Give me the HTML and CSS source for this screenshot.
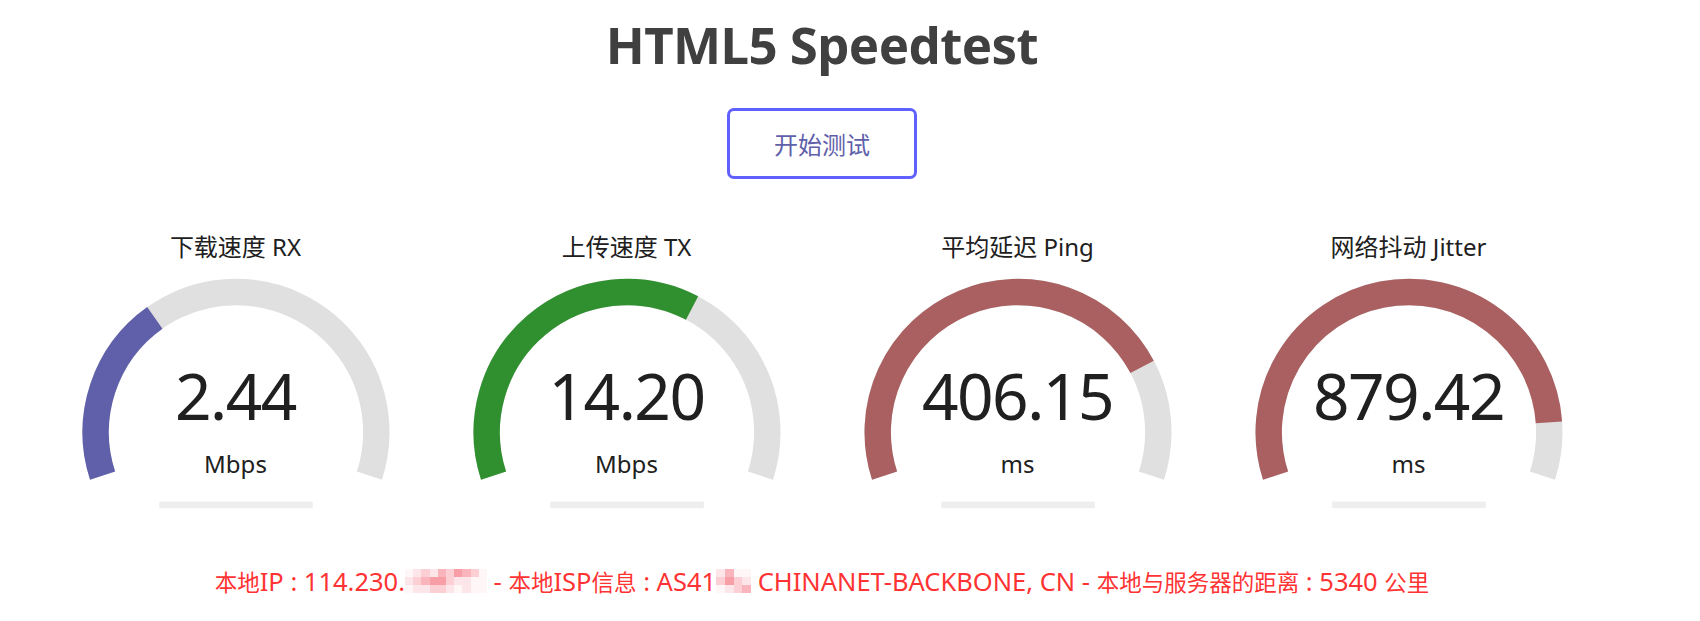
FILE: index.html
```
<!DOCTYPE html>
<html lang="zh-CN">
<head>
<meta charset="utf-8">
<title>HTML5 Speedtest</title>
<link rel="stylesheet" href="styles.css">
</head>
<body>
<div class="page">
  <h1 class="title">HTML5 Speedtest</h1>
  <button class="start-btn" type="button">开始测试</button>

  <div class="gauges">
    <div class="gauge">
      <svg class="meter" viewBox="0 0 384 300" width="384" height="300">
        <path class="arc-bg" d="M 58.57 247.66 A 140.3 140.3 0 1 1 325.43 247.66"/>
        <path class="arc-dl" d="M 58.57 247.66 A 140.3 140.3 0 0 1 110.82 89.87"/>
        <rect class="progress" x="115.2" y="273.6" width="153.6" height="6.6"/>
      </svg>
      <div class="gauge-name">下载速度 RX</div>
      <div class="gauge-value"><div class="num">2.44</div><div class="unit">Mbps</div></div>
    </div>

    <div class="gauge">
      <svg class="meter" viewBox="0 0 384 300" width="384" height="300">
        <path class="arc-bg" d="M 58.57 247.66 A 140.3 140.3 0 1 1 325.43 247.66"/>
        <path class="arc-ul" d="M 58.57 247.66 A 140.3 140.3 0 0 1 257.07 80.01"/>
        <rect class="progress" x="115.2" y="273.6" width="153.6" height="6.6"/>
      </svg>
      <div class="gauge-name">上传速度 TX</div>
      <div class="gauge-value"><div class="num">14.20</div><div class="unit">Mbps</div></div>
    </div>

    <div class="gauge">
      <svg class="meter" viewBox="0 0 384 300" width="384" height="300">
        <path class="arc-bg" d="M 58.57 247.66 A 140.3 140.3 0 1 1 325.43 247.66"/>
        <path class="arc-ms" d="M 58.57 247.66 A 140.3 140.3 0 0 1 316.11 138.87"/>
        <rect class="progress" x="115.2" y="273.6" width="153.6" height="6.6"/>
      </svg>
      <div class="gauge-name">平均延迟 Ping</div>
      <div class="gauge-value"><div class="num">406.15</div><div class="unit">ms</div></div>
    </div>

    <div class="gauge">
      <svg class="meter" viewBox="0 0 384 300" width="384" height="300">
        <path class="arc-bg" d="M 58.57 247.66 A 140.3 140.3 0 1 1 325.43 247.66"/>
        <path class="arc-ms" d="M 58.57 247.66 A 140.3 140.3 0 1 1 331.95 194.42"/>
        <rect class="progress" x="115.2" y="273.6" width="153.6" height="6.6"/>
      </svg>
      <div class="gauge-name">网络抖动 Jitter</div>
      <div class="gauge-value"><div class="num">879.42</div><div class="unit">ms</div></div>
    </div>
  </div>

  <div class="ip-info"><span class="cjk">本地</span>IP : 114.230.<span class="mosaic mosaic-ip"><i class="c0"></i><i class="c1"></i><i class="c2"></i><i class="c1"></i><i class="c3"></i><i class="c2"></i><i class="c4"></i><i class="c3"></i><i class="c2"></i><i class="c0"></i><i class="c1"></i><i class="c2"></i><i class="c3"></i><i class="c4"></i><i class="c4"></i><i class="c2"></i><i class="c1"></i><i class="c1"></i><i class="c0"></i><i class="c0"></i><i class="c0"></i><i class="c1"></i><i class="c1"></i><i class="c2"></i><i class="c2"></i><i class="c1"></i><i class="c0"></i><i class="c1"></i><i class="c0"></i><i class="c0"></i></span> - <span class="cjk">本地</span>ISP<span class="cjk">信息</span> : AS41<span class="mosaic mosaic-as"><i class="c1"></i><i class="c3"></i><i class="c0"></i><i class="c0"></i><i class="c2"></i><i class="c4"></i><i class="c2"></i><i class="c1"></i><i class="c0"></i><i class="c1"></i><i class="c2"></i><i class="c3"></i></span> CHINANET-BACKBONE, CN - <span class="cjk">本地与服务器的距离</span> : 5340 <span class="cjk">公里</span></div>
</div>
</body>
</html>
```
FILE: styles.css
```
html, body {
  margin: 0;
  padding: 0;
  background: #ffffff;
}

body {
  font-family: "Noto Sans", "Noto Sans CJK SC", sans-serif;
  color: #202020;
}

.page {
  width: 1644px;
  padding-top: 19px;
  display: flex;
  flex-direction: column;
  align-items: center;
  text-align: center;
}

.title {
  margin: 0;
  font-size: 51px;
  line-height: 51px;
  font-weight: 700;
  color: #404040;
  letter-spacing: -0.6px;
}

.start-btn {
  margin-top: 38px;
  width: 190px;
  height: 71px;
  box-sizing: border-box;
  border: 3.5px solid #6060ff;
  border-radius: 7px;
  background: transparent;
  color: #6060aa;
  font-family: "Noto Sans", "Noto Sans CJK SC", sans-serif;
  font-size: 24px;
  display: flex;
  align-items: center;
  justify-content: center;
  padding: 0;
  cursor: pointer;
}

.gauges {
  margin-top: 49px;
  display: flex;
  gap: 7px;
  justify-content: center;
}

.gauge {
  width: 384px;
  height: 300px;
  display: grid;
}

.gauge > * {
  grid-area: 1 / 1;
}

.meter {
  display: block;
}

.arc-bg,
.arc-dl,
.arc-ul,
.arc-ms {
  fill: none;
  stroke-width: 26.4;
  stroke-linecap: butt;
}

.arc-bg { stroke: #e0e0e0; }
.arc-dl { stroke: #6060aa; }
.arc-ul { stroke: #309030; }
.arc-ms { stroke: #aa6060; }

.progress { fill: #eeeeee; }

.gauge-name {
  align-self: start;
  padding-top: 2.7px;
  font-size: 24px;
  line-height: 32px;
  color: #202020;
}

.gauge-value {
  align-self: end;
  padding-bottom: 52px;
  display: flex;
  flex-direction: column;
  align-items: center;
}

.num {
  font-size: 64px;
  line-height: 64px;
  letter-spacing: -1.5px;
  color: #202020;
}

.unit {
  margin-top: 24.5px;
  font-size: 24px;
  line-height: 24px;
  color: #202020;
}

.ip-info {
  margin-top: 38px;
  font-size: 25.5px;
  line-height: 30px;
  color: #ff3333;
  white-space: nowrap;
}

.ip-info .cjk {
  font-size: 22.5px;
}

.mosaic {
  display: inline-grid;
  grid-auto-rows: 8px;
  vertical-align: 14px;
}

.mosaic-ip {
  grid-template-columns: repeat(10, 8.2px);
}

.mosaic-as {
  grid-template-columns: repeat(4, 8.75px);
}

.mosaic i { display: block; }
.mosaic .c0 { background: #fff6f8; }
.mosaic .c1 { background: #fde6ea; }
.mosaic .c2 { background: #fccfd5; }
.mosaic .c3 { background: #fab4bc; }
.mosaic .c4 { background: #f89ea6; }
```
